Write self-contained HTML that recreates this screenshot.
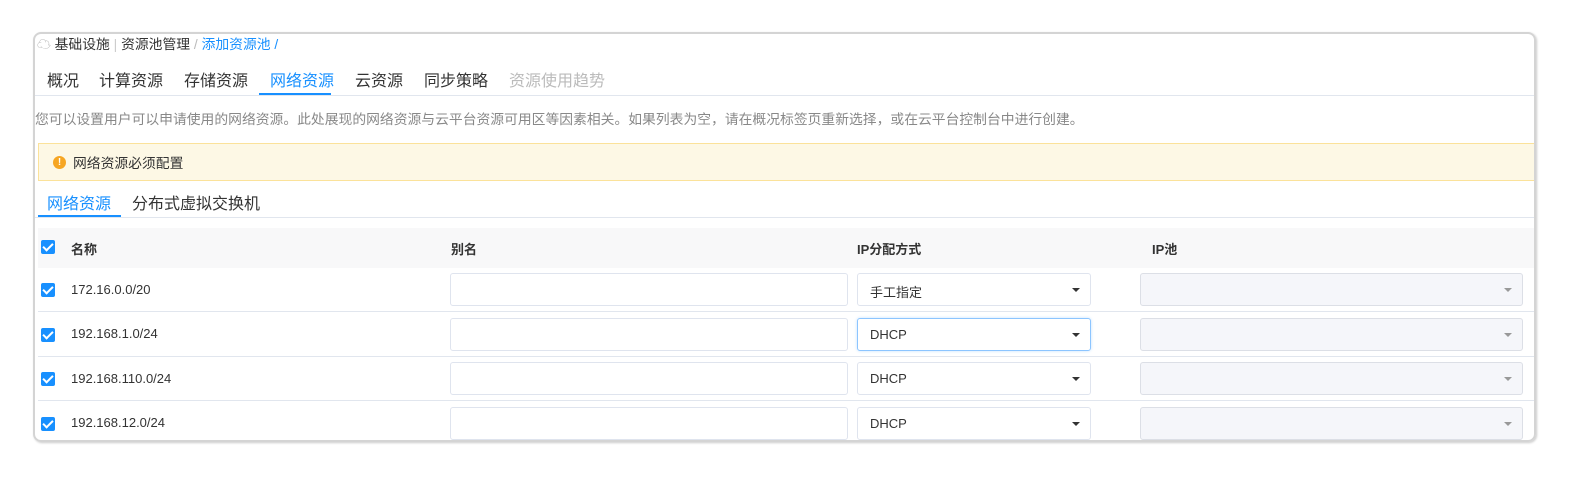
<!DOCTYPE html>
<html><head><meta charset="utf-8"><style>
*{box-sizing:border-box;margin:0;padding:0}
body{width:1590px;height:480px;background:#fff;font-family:"Liberation Sans","Noto Sans CJK SC",sans-serif;color:#333;position:relative;overflow:hidden}
.frame{position:absolute;left:33px;top:32px;width:1503px;height:410px;border:2px solid #d4d4d4;border-radius:8px;box-shadow:1px 1px 2px #ccc;overflow:hidden}
.abs{position:absolute;white-space:nowrap}
.bc{top:-1px;left:2px;font-size:13.8px;color:#333}
.tab{top:33px;font-size:16px;color:#333}
.line{position:absolute;left:0;right:0;height:1px;background:#e1e6ee}
.cb{position:absolute;width:14px;height:14px;background:#1890ff;border-radius:2px}
.cb:after{content:"";position:absolute;left:4px;top:1px;width:4px;height:8px;border:solid #fff;border-width:0 2px 2px 0;transform:rotate(45deg)}
.inp{position:absolute;height:33px;border:1px solid #dfe4ee;border-radius:3px;background:#fff}
.sel{font-size:13px;padding:8px 12px;color:#333}
.sel:after{content:"";position:absolute;right:10px;top:14px;border:4px solid transparent;border-top:4px solid #333;border-bottom:0}
.pool{background:#f5f6fa;border-color:#dcdfe6}
.pool:after{content:"";position:absolute;right:10px;top:14px;border:4px solid transparent;border-top:4px solid #999;border-bottom:0}
.cell{font-size:13px;color:#333}
</style></head><body>
<div class="frame">
<div class="abs bc"><span style="color:#aaa">☁</span> 基础设施 <span style="color:#ccc">|</span> 资源池管理 <span style="color:#bbb">/</span> <span style="color:#1890ff">添加资源池</span> <span style="color:#1890ff">/</span></div>
<div class="abs tab" style="left:12px">概况</div>
<div class="abs tab" style="left:64px">计算资源</div>
<div class="abs tab" style="left:149px">存储资源</div>
<div class="abs tab" style="left:235px;color:#1890ff">网络资源</div>
<div class="abs tab" style="left:320px">云资源</div>
<div class="abs tab" style="left:389px">同步策略</div>
<div class="abs tab" style="left:474px;color:#bbb">资源使用趋势</div>
<div class="line" style="top:61px"></div>
<div style="position:absolute;left:224px;top:59px;width:72px;height:2px;background:#1890ff"></div>
<div class="abs" style="left:0;top:74px;font-size:13.8px;color:#888">您可以设置用户可以申请使用的网络资源。此处展现的网络资源与云平台资源可用区等因素相关。如果列表为空，请在概况标签页重新选择，或在云平台控制台中进行创建。</div>
<div style="position:absolute;left:3px;right:0;top:109px;height:38px;background:#fdf8e5;border:1px solid #fbe29a;border-right:0"></div>
<div style="position:absolute;left:18px;top:122px;width:13px;height:13px;border-radius:50%;background:#f6a623;color:#fff;font-size:10px;font-weight:bold;text-align:center;line-height:13px">!</div>
<div class="abs" style="left:38px;top:118px;font-size:13.8px">网络资源必须配置</div>
<div class="abs" style="left:12px;top:156px;font-size:16px;color:#1890ff">网络资源</div>
<div class="abs" style="left:97px;top:156px;font-size:16px">分布式虚拟交换机</div>
<div class="line" style="top:183px"></div>
<div style="position:absolute;left:3px;top:181px;width:83px;height:2px;background:#1890ff"></div>
<div style="position:absolute;left:3px;right:0;top:194px;height:40px;background:#f8f8f9"></div>
<div class="cb" style="left:6px;top:206px"></div>
<div class="abs cell" style="left:36px;top:205px;font-weight:bold">名称</div>
<div class="abs cell" style="left:416px;top:205px;font-weight:bold">别名</div>
<div class="abs cell" style="left:822px;top:205px;font-weight:bold">IP分配方式</div>
<div class="abs cell" style="left:1117px;top:205px;font-weight:bold">IP池</div>

<div class="cb" style="left:6px;top:249px"></div>
<div class="abs cell" style="left:36px;top:248px">172.16.0.0/20</div>
<div class="inp" style="left:415px;top:239px;width:398px"></div>
<div class="inp sel" style="left:822px;top:239px;width:234px">手工指定</div>
<div class="inp pool" style="left:1105px;top:239px;width:383px"></div>
<div class="line" style="top:277px;left:3px"></div>

<div class="cb" style="left:6px;top:294px"></div>
<div class="abs cell" style="left:36px;top:292px">192.168.1.0/24</div>
<div class="inp" style="left:415px;top:284px;width:398px"></div>
<div class="inp sel" style="left:822px;top:284px;width:234px;border-color:#8cc5ff;box-shadow:0 0 3px #c6e2ff">DHCP</div>
<div class="inp pool" style="left:1105px;top:284px;width:383px"></div>
<div class="line" style="top:322px;left:3px"></div>

<div class="cb" style="left:6px;top:338px"></div>
<div class="abs cell" style="left:36px;top:337px">192.168.110.0/24</div>
<div class="inp" style="left:415px;top:328px;width:398px"></div>
<div class="inp sel" style="left:822px;top:328px;width:234px">DHCP</div>
<div class="inp pool" style="left:1105px;top:328px;width:383px"></div>
<div class="line" style="top:366px;left:3px"></div>

<div class="cb" style="left:6px;top:383px"></div>
<div class="abs cell" style="left:36px;top:381px">192.168.12.0/24</div>
<div class="inp" style="left:415px;top:373px;width:398px"></div>
<div class="inp sel" style="left:822px;top:373px;width:234px">DHCP</div>
<div class="inp pool" style="left:1105px;top:373px;width:383px"></div>
</div>
</body></html>
